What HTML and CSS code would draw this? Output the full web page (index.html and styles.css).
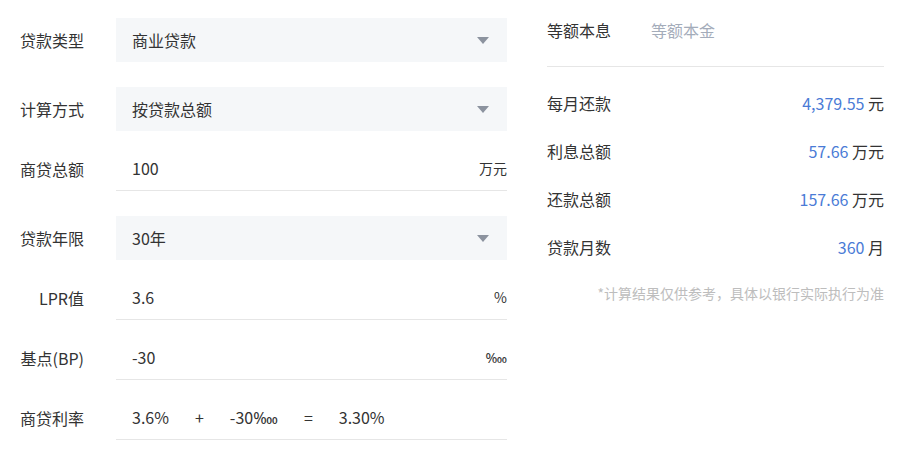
FILE: index.html
```html
<!DOCTYPE html>
<html lang="zh-CN">
<head>
<meta charset="utf-8">
<title>房贷计算器</title>
<link rel="stylesheet" href="styles.css">
</head>
<body>
<div class="page">
  <div class="form">
    <div class="item item-select">
      <div class="label">贷款类型</div>
      <div class="control select">
        <span class="value">商业贷款</span>
        <span class="arrow"></span>
      </div>
    </div>
    <div class="item item-select">
      <div class="label">计算方式</div>
      <div class="control select">
        <span class="value">按贷款总额</span>
        <span class="arrow"></span>
      </div>
    </div>
    <div class="item">
      <div class="label">商贷总额</div>
      <div class="control input">
        <span class="value">100</span>
        <span class="unit">万元</span>
      </div>
    </div>
    <div class="item item-select">
      <div class="label">贷款年限</div>
      <div class="control select">
        <span class="value">30年</span>
        <span class="arrow"></span>
      </div>
    </div>
    <div class="item">
      <div class="label">LPR值</div>
      <div class="control input">
        <span class="value">3.6</span>
        <span class="unit">%</span>
      </div>
    </div>
    <div class="item">
      <div class="label">基点(BP)</div>
      <div class="control input">
        <span class="value">-30</span>
        <span class="unit">‱</span>
      </div>
    </div>
    <div class="item">
      <div class="label">商贷利率</div>
      <div class="control input formula">
        <span>3.6%</span>
        <span>+</span>
        <span>-30‱</span>
        <span>=</span>
        <span>3.30%</span>
      </div>
    </div>
  </div>
  <div class="result">
    <div class="tabs">
      <span class="tab active">等额本息</span>
      <span class="tab">等额本金</span>
    </div>
    <div class="rows">
      <div class="row"><span class="name">每月还款</span><span class="num"><em>4,379.55</em> 元</span></div>
      <div class="row"><span class="name">利息总额</span><span class="num"><em>57.66</em> 万元</span></div>
      <div class="row"><span class="name">还款总额</span><span class="num"><em>157.66</em> 万元</span></div>
      <div class="row"><span class="name">贷款月数</span><span class="num"><em>360</em> 月</span></div>
    </div>
    <div class="note">*计算结果仅供参考，具体以银行实际执行为准</div>
  </div>
</div>
</body>
</html>
```
FILE: styles.css
```css
html, body {
  margin: 0;
  padding: 0;
  background: #ffffff;
}
body {
  font-family: "Microsoft YaHei", "Noto Sans CJK SC", "Noto Sans", sans-serif;
  color: #333333;
  font-size: 16px;
}
.page {
  display: flex;
  gap: 40px;
  padding: 8px 18px 0 20px;
}
.form {
  width: 487px;
  display: flex;
  flex-direction: column;
  gap: 15px;
}
.item {
  display: flex;
  align-items: center;
  gap: 32px;
}
.item-select {
  margin-top: 10px;
}
.label {
  width: 64px;
  text-align: right;
  font-size: 16px;
  color: #333;
  line-height: 22px;
  white-space: nowrap;
}
.control {
  flex: 1;
  height: 44px;
  box-sizing: border-box;
  display: flex;
  align-items: center;
  padding: 0 0 0 16px;
  line-height: 22px;
}
.select {
  background: #f5f7f9;
  padding-right: 18px;
  justify-content: space-between;
}
.input {
  height: 45px;
  border-bottom: 1px solid #e6e6e6;
  justify-content: space-between;
}
.arrow {
  width: 0;
  height: 0;
  border-left: 6px solid transparent;
  border-right: 6px solid transparent;
  border-top: 7px solid #8c939f;
}
.unit {
  font-size: 14px;
  color: #333;
}
.formula {
  justify-content: flex-start;
  gap: 26px;
}
.result {
  width: 337px;
}
.tabs {
  display: flex;
  gap: 40px;
  line-height: 44px;
  padding-bottom: 14px;
  border-bottom: 1px solid #e6e6e6;
}
.tab {
  color: #a4acba;
}
.tab.active {
  color: #333;
}
.rows {
  margin-top: 12px;
}
.row {
  display: flex;
  justify-content: space-between;
  line-height: 48px;
  height: 48px;
}
.num em {
  font-style: normal;
  color: #4a7bd6;
}
.note {
  margin-top: 12px;
  line-height: 20px;
  font-size: 14px;
  color: #bdbdbd;
  text-align: right;
}
```
